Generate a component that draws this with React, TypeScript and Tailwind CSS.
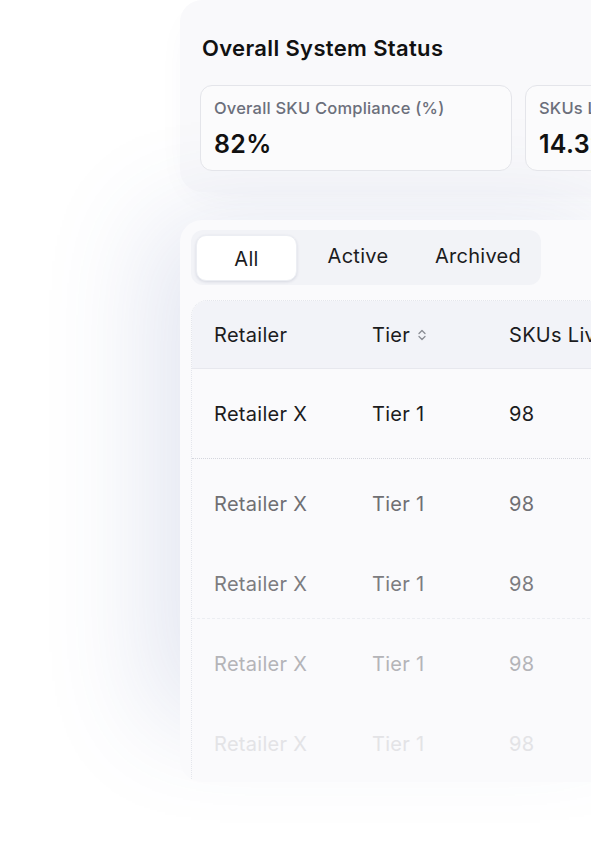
import React from 'react';

const rows = [
  { tone: 'text-[#1c1c1e]', h: 'h-[90px]', line: 'border-b border-dotted border-[#d4d6dd]' },
  { tone: 'text-[#6f6f73]', h: 'h-[80px] pt-[10px]', line: '' },
  { tone: 'text-[#7c7c80]', h: 'h-[80px] pt-[10px]', line: 'border-b border-dashed border-[#eceef2]' },
  { tone: 'text-[#b4b4b8]', h: 'h-[80px] pt-[10px]', line: '' },
  { tone: 'text-[#e3e3e6]', h: 'h-[80px] pt-[10px]', line: '' },
];

function StatCard({ label, value }: { label: string; value: string }) {
  return (
    <div className="w-[312px] shrink-0 h-[86px] rounded-xl border border-[#e4e5ea] bg-[#fbfbfc] pl-[13px] pt-[10px]">
      <div className="text-[16.5px] leading-[24px] text-[#6b6f7b] font-medium tracking-[0.2px] whitespace-nowrap">{label}</div>
      <div className="mt-[9px] text-[25px] leading-[30px] font-semibold text-[#111] tracking-[0.3px]">{value}</div>
    </div>
  );
}

export default function App() {
  return (
    <div className="w-[591px] h-[864px] overflow-hidden bg-white" style={{ fontFamily: 'Inter, "Noto Sans", sans-serif' }}>
      <div className="pl-[180px]">
        <section className="w-[520px] h-[192px] rounded-[22px] bg-[#f9f9fb] pl-[20px] pt-[34px] shadow-[0_10px_40px_-20px_rgba(60,70,120,0.10)]">
          <h1 className="ml-[2px] text-[22px] leading-[28px] font-semibold text-[#111] tracking-[0.35px]">Overall System Status</h1>
          <div className="mt-[23px] flex gap-[13px]">
            <StatCard label="Overall SKU Compliance (%)" value="82%" />
            <StatCard label="SKUs Live" value="14.32" />
          </div>
        </section>

        <section className="mt-[28px] w-[520px] h-[562px] rounded-[22px] bg-[#fafafc] pl-[11px] pt-[10px] shadow-[-60px_-30px_100px_-30px_rgba(70,90,160,0.15)]">
          <div className="w-[350px] h-[55px] rounded-xl bg-[#f2f3f7] p-[4px] pl-[5px] flex items-center text-[20px] tracking-[0.3px] text-[#1c1c1e]">
            <button className="w-[101px] h-[46px] rounded-[10px] bg-white shadow-[0_1px_3px_rgba(40,50,90,0.14)] border border-[#eceef3] pt-[3px]">All</button>
            <span className="w-[122px] text-center -mt-[3px]">Active</span>
            <span className="w-[118px] text-center -mt-[3px]">Archived</span>
          </div>

          <div className="mt-[15px] rounded-t-2xl border-l border-t border-dotted border-[#e4e6ec] overflow-hidden">
            <div className="h-[68px] bg-[#f2f3f8] border-b border-[#e7e8ee] flex items-center pl-[22px] text-[20px] tracking-[0.3px] text-[#1c1c1e] whitespace-nowrap">
              <span className="w-[158px] shrink-0">Retailer</span>
              <span className="w-[137px] shrink-0 flex items-center gap-[7px]">
                Tier
                <svg width="10" height="14" viewBox="0 0 10 14" fill="none" stroke="#8a8c94" strokeWidth="1.3" strokeLinecap="round" strokeLinejoin="round">
                  <path d="M2 5.5 5 2.5 8 5.5" />
                  <path d="M2 8.5 5 11.5 8 8.5" />
                </svg>
              </span>
              <span>SKUs Live</span>
            </div>
            {rows.map((r, i) => (
              <div key={i} className={`${r.h} ${r.line} flex items-center pl-[22px] text-[20px] tracking-[0.3px] ${r.tone}`}>
                <span className="w-[158px] shrink-0">Retailer X</span>
                <span className="w-[137px] shrink-0">Tier 1</span>
                <span>98</span>
              </div>
            ))}
          </div>
        </section>
      </div>
    </div>
  );
}
